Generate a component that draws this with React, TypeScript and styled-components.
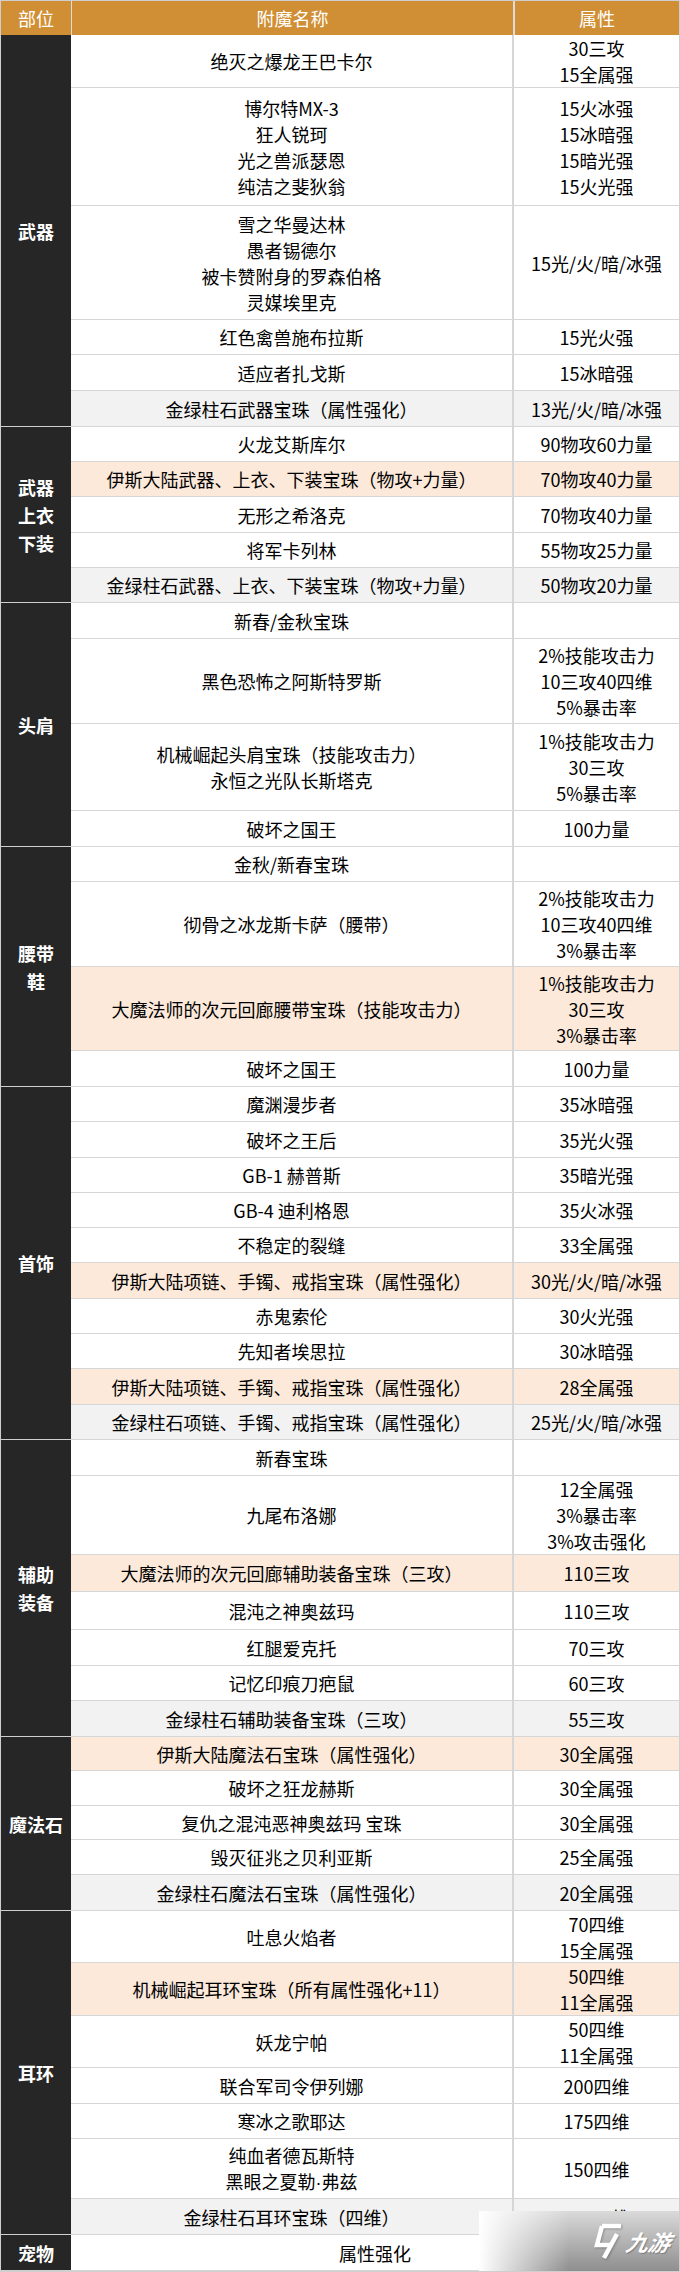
import styled, { createGlobalStyle } from "styled-components";

type Tone = "peach" | "gray" | undefined;

type RowData = {
  name: string[];
  value?: string[];
  h: number;
  tone?: Tone;
  span?: boolean;
};

type GroupData = {
  label: string[];
  rows: RowData[];
};

const groups: GroupData[] = [
  {
    label: ["武器"],
    rows: [
      { name: ["绝灭之爆龙王巴卡尔"], value: ["30三攻", "15全属强"], h: 53 },
      {
        name: ["博尔特MX-3", "狂人锐珂", "光之兽派瑟恩", "纯洁之斐狄翁"],
        value: ["15火冰强", "15冰暗强", "15暗光强", "15火光强"],
        h: 118,
      },
      {
        name: ["雪之华曼达林", "愚者锡德尔", "被卡赞附身的罗森伯格", "灵媒埃里克"],
        value: ["15光/火/暗/冰强"],
        h: 114,
      },
      { name: ["红色禽兽施布拉斯"], value: ["15光火强"], h: 35 },
      { name: ["适应者扎戈斯"], value: ["15冰暗强"], h: 36 },
      { name: ["金绿柱石武器宝珠（属性强化）"], value: ["13光/火/暗/冰强"], h: 36, tone: "gray" },
    ],
  },
  {
    label: ["武器", "上衣", "下装"],
    rows: [
      { name: ["火龙艾斯库尔"], value: ["90物攻60力量"], h: 35 },
      { name: ["伊斯大陆武器、上衣、下装宝珠（物攻+力量）"], value: ["70物攻40力量"], h: 35, tone: "peach" },
      { name: ["无形之希洛克"], value: ["70物攻40力量"], h: 36 },
      { name: ["将军卡列林"], value: ["55物攻25力量"], h: 35 },
      { name: ["金绿柱石武器、上衣、下装宝珠（物攻+力量）"], value: ["50物攻20力量"], h: 35, tone: "gray" },
    ],
  },
  {
    label: ["头肩"],
    rows: [
      { name: ["新春/金秋宝珠"], value: [], h: 36 },
      { name: ["黑色恐怖之阿斯特罗斯"], value: ["2%技能攻击力", "10三攻40四维", "5%暴击率"], h: 85 },
      {
        name: ["机械崛起头肩宝珠（技能攻击力）", "永恒之光队长斯塔克"],
        value: ["1%技能攻击力", "30三攻", "5%暴击率"],
        h: 87,
      },
      { name: ["破坏之国王"], value: ["100力量"], h: 36 },
    ],
  },
  {
    label: ["腰带", "鞋"],
    rows: [
      { name: ["金秋/新春宝珠"], value: [], h: 35 },
      { name: ["彻骨之冰龙斯卡萨（腰带）"], value: ["2%技能攻击力", "10三攻40四维", "3%暴击率"], h: 85 },
      {
        name: ["大魔法师的次元回廊腰带宝珠（技能攻击力）"],
        value: ["1%技能攻击力", "30三攻", "3%暴击率"],
        h: 84,
        tone: "peach",
      },
      { name: ["破坏之国王"], value: ["100力量"], h: 36 },
    ],
  },
  {
    label: ["首饰"],
    rows: [
      { name: ["魔渊漫步者"], value: ["35冰暗强"], h: 35 },
      { name: ["破坏之王后"], value: ["35光火强"], h: 36 },
      { name: ["GB-1 赫普斯"], value: ["35暗光强"], h: 35 },
      { name: ["GB-4 迪利格恩"], value: ["35火冰强"], h: 35 },
      { name: ["不稳定的裂缝"], value: ["33全属强"], h: 35 },
      { name: ["伊斯大陆项链、手镯、戒指宝珠（属性强化）"], value: ["30光/火/暗/冰强"], h: 36, tone: "peach" },
      { name: ["赤鬼索伦"], value: ["30火光强"], h: 35 },
      { name: ["先知者埃思拉"], value: ["30冰暗强"], h: 35 },
      { name: ["伊斯大陆项链、手镯、戒指宝珠（属性强化）"], value: ["28全属强"], h: 36, tone: "peach" },
      { name: ["金绿柱石项链、手镯、戒指宝珠（属性强化）"], value: ["25光/火/暗/冰强"], h: 35, tone: "gray" },
    ],
  },
  {
    label: ["辅助", "装备"],
    rows: [
      { name: ["新春宝珠"], value: [], h: 36 },
      { name: ["九尾布洛娜"], value: ["12全属强", "3%暴击率", "3%攻击强化"], h: 79 },
      { name: ["大魔法师的次元回廊辅助装备宝珠（三攻）"], value: ["110三攻"], h: 37, tone: "peach" },
      { name: ["混沌之神奥兹玛"], value: ["110三攻"], h: 38 },
      { name: ["红腿爱克托"], value: ["70三攻"], h: 36 },
      { name: ["记忆印痕刀疤鼠"], value: ["60三攻"], h: 35 },
      { name: ["金绿柱石辅助装备宝珠（三攻）"], value: ["55三攻"], h: 36, tone: "gray" },
    ],
  },
  {
    label: ["魔法石"],
    rows: [
      { name: ["伊斯大陆魔法石宝珠（属性强化）"], value: ["30全属强"], h: 34, tone: "peach" },
      { name: ["破坏之狂龙赫斯"], value: ["30全属强"], h: 35 },
      { name: ["复仇之混沌恶神奥兹玛 宝珠"], value: ["30全属强"], h: 34 },
      { name: ["毁灭征兆之贝利亚斯"], value: ["25全属强"], h: 35 },
      { name: ["金绿柱石魔法石宝珠（属性强化）"], value: ["20全属强"], h: 36, tone: "gray" },
    ],
  },
  {
    label: ["耳环"],
    rows: [
      { name: ["吐息火焰者"], value: ["70四维", "15全属强"], h: 52 },
      { name: ["机械崛起耳环宝珠（所有属性强化+11）"], value: ["50四维", "11全属强"], h: 53, tone: "peach" },
      { name: ["妖龙宁帕"], value: ["50四维", "11全属强"], h: 52 },
      { name: ["联合军司令伊列娜"], value: ["200四维"], h: 36 },
      { name: ["寒冰之歌耶达"], value: ["175四维"], h: 35 },
      { name: ["纯血者德瓦斯特", "黑眼之夏勒·弗兹"], value: ["150四维"], h: 60 },
      { name: ["金绿柱石耳环宝珠（四维）"], value: ["135四维"], h: 36, tone: "gray" },
    ],
  },
  {
    label: ["宠物"],
    rows: [{ name: ["属性强化"], h: 36, span: true }],
  },
];

// the middle dot is narrow in the source, so it gets a latin font
const renderLine = (line: string) => {
  if (!line.includes("·")) return line;
  const parts = line.split("·");
  return parts.map((part, i) => (
    <span key={i}>
      {part}
      {i < parts.length - 1 ? <Dot>·</Dot> : null}
    </span>
  ));
};

const App = () => {
  return (
    <>
      <GlobalStyle />
      <Table>
        <Header>
          <HeaderCell>部位</HeaderCell>
          <HeaderCell $divider={1}>附魔名称</HeaderCell>
          <HeaderCell $divider={2}>属性</HeaderCell>
        </Header>
        {groups.map((group, gi) => (
          <Group key={gi}>
            <Label>
              {group.label.map((line) => (
                <span key={line}>{line}</span>
              ))}
            </Label>
            <Rows>
              {group.rows.map((row, ri) => (
                <Row key={ri} $h={row.h} $tone={row.tone}>
                  {row.span ? (
                    <SpanCell>{row.name[0]}</SpanCell>
                  ) : (
                    <>
                      <NameCell>
                        {row.name.map((line, li) => (
                          <span key={li}>{renderLine(line)}</span>
                        ))}
                      </NameCell>
                      <ValueCell>
                        {row.value?.map((line, li) => (
                          <span key={li}>{line}</span>
                        ))}
                      </ValueCell>
                    </>
                  )}
                </Row>
              ))}
            </Rows>
          </Group>
        ))}
        <Watermark>
          <svg width="34" height="40" viewBox="0 0 34 40">
            <g fill="none" stroke="#ffffff" strokeWidth="4.5" strokeLinejoin="miter">
              <path d="M13 5 H32" />
              <path d="M13 5 L8 24 H21" />
              <path d="M28 13 L15 37" />
            </g>
          </svg>
          <LogoText>九游</LogoText>
        </Watermark>
      </Table>
    </>
  );
};

const GlobalStyle = createGlobalStyle`
  body {
    margin: 0;
    background: #ffffff;
    font-family: "Noto Sans CJK SC", "Noto Sans", sans-serif;
    color: #000000;
  }
`;

const Table = styled.div`
  position: relative;
  width: 680px;
  box-sizing: border-box;
  border: 1px solid #cfcfcf;
  overflow: hidden;
`;

const Header = styled.div`
  display: grid;
  grid-template-columns: 70px 442px 166px;
  height: 34px;
  background: #d08f35;
`;

const HeaderCell = styled.div<{ $divider?: number }>`
  display: flex;
  align-items: center;
  justify-content: center;
  box-sizing: border-box;
  border-left: ${({ $divider }) => ($divider ? `${$divider}px solid #dcdcdc` : "none")};
  color: #ffffff;
  font-size: 18px;
`;

const Group = styled.div`
  display: flex;
`;

const Label = styled.div`
  width: 70px;
  flex-shrink: 0;
  box-sizing: border-box;
  display: flex;
  flex-direction: column;
  align-items: center;
  justify-content: center;
  background: #262626;
  border-bottom: 1px solid #cfcfcf;
  color: #ffffff;
  font-size: 18px;
  font-weight: 700;
  line-height: 28px;
`;

const Rows = styled.div`
  flex: 1;
  display: flex;
  flex-direction: column;
`;

const toneColor = (tone: Tone) =>
  tone === "peach" ? "#fce9da" : tone === "gray" ? "#f2f2f2" : "#ffffff";

const Row = styled.div<{ $h: number; $tone?: Tone }>`
  display: grid;
  grid-template-columns: 441px 1fr;
  height: ${({ $h }) => $h}px;
  box-sizing: border-box;
  border-bottom: 1px solid #d6d6d6;
  background: ${({ $tone }) => toneColor($tone)};
`;

const NameCell = styled.div`
  display: flex;
  flex-direction: column;
  align-items: center;
  justify-content: center;
  font-size: 18px;
  line-height: 26px;
  white-space: nowrap;
`;

const ValueCell = styled(NameCell)`
  border-left: 2px solid #d6d6d6;
`;

const SpanCell = styled(NameCell)`
  grid-column: 1 / -1;
`;

const Dot = styled.span`
  font-family: "Liberation Sans", sans-serif;
`;

const Watermark = styled.div`
  position: absolute;
  right: 0;
  bottom: 0;
  width: 200px;
  height: 60px;
  display: flex;
  align-items: center;
  justify-content: flex-end;
  gap: 4px;
  padding-right: 8px;
  box-sizing: border-box;
  background: linear-gradient(to right, #ffffff 0%, rgba(255, 255, 255, 0) 45%),
    linear-gradient(to bottom, #dadada 0%, #8e8e8e 100%);

  svg {
    filter: drop-shadow(1px 1px 1px rgba(0, 0, 0, 0.25));
  }
`;

const LogoText = styled.span`
  color: #ffffff;
  font-size: 22px;
  font-weight: 700;
  font-style: italic;
  transform: skewX(-12deg);
  text-shadow: 1px 1px 1px rgba(0, 0, 0, 0.25);
`;

export default App;
